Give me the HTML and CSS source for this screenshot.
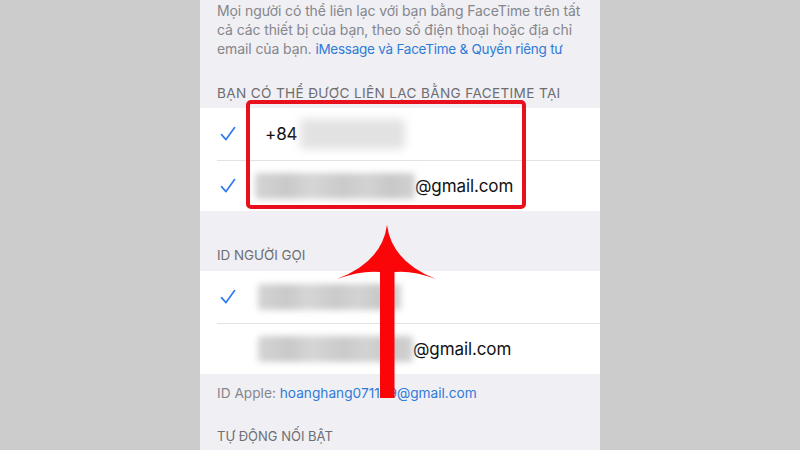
FILE: index.html
```html
<!DOCTYPE html>
<html lang="vi">
<head>
<meta charset="utf-8">
<title>FaceTime</title>
<link rel="stylesheet" href="styles.css">
</head>
<body>
<div class="page">
  <div class="phone">
    <p class="desc">Mọi người có thể liên lạc với bạn bằng FaceTime trên tất cả các thiết bị của bạn, theo số điện thoại hoặc địa chỉ email của bạn. <span class="link tight">iMessage và FaceTime &amp; Quyền riêng tư</span></p>

    <div class="header h1">BẠN CÓ THỂ ĐƯỢC LIÊN LẠC BẰNG FACETIME TẠI</div>
    <div class="group">
      <div class="row">
        <span class="check"><svg viewBox="0 0 16 16" width="16" height="16"><path d="M1.5 8.6 L6 13.6 L14.6 1.6" fill="none" stroke="#2f7bf0" stroke-width="1.7" stroke-linecap="round" stroke-linejoin="round"/></svg></span>
        <span class="val phone-num">+84</span><span class="blur b1"></span>
      </div>
      <div class="row">
        <span class="check"><svg viewBox="0 0 16 16" width="16" height="16"><path d="M1.5 8.6 L6 13.6 L14.6 1.6" fill="none" stroke="#2f7bf0" stroke-width="1.7" stroke-linecap="round" stroke-linejoin="round"/></svg></span>
        <span class="blur b2"></span><span class="val">@gmail.com</span>
      </div>
    </div>

    <div class="header h2">ID NGƯỜI GỌI</div>
    <div class="group">
      <div class="row">
        <span class="check"><svg viewBox="0 0 16 16" width="16" height="16"><path d="M1.5 8.6 L6 13.6 L14.6 1.6" fill="none" stroke="#2f7bf0" stroke-width="1.7" stroke-linecap="round" stroke-linejoin="round"/></svg></span>
        <span class="blur b3"></span>
      </div>
      <div class="row">
        <span class="check"></span>
        <span class="blur b4"></span><span class="val">@gmail.com</span>
      </div>
    </div>

    <div class="footer">ID Apple: <span class="link">hoanghang071109@gmail.com</span></div>
    <div class="header h3">TỰ ĐỘNG NỐI BẬT</div>

    <div class="highlight"></div>
    <svg class="arrow" viewBox="0 0 400 450" width="400" height="450">
      <path d="M187 225 Q192 262 236 279 Q212 270 194.5 272 L194.5 398 L180 398 L180 272 Q162 270 137 279 Q182 262 187 225 Z" fill="#fa0508"/>
    </svg>
  </div>
</div>
</body>
</html>
```

FILE: styles.css
```css
html, body {
  margin: 0;
  padding: 0;
}
body {
  background: #cccccc;
  font-family: "Inter", "Noto Sans", "DejaVu Sans", sans-serif;
}
.page {
  display: flex;
  justify-content: center;
  height: 450px;
  overflow: hidden;
}
.phone {
  position: relative;
  width: 400px;
  height: 450px;
  background: #efeff4;
  overflow: hidden;
}
.desc {
  margin: 0;
  padding: 1px 17px 0 17px;
  font-size: 14px;
  line-height: 19px;
  color: #86868b;
  letter-spacing: -0.1px;
}
.link {
  color: #2f7bd8;
}
.tight {
  font-size: 13.5px;
  letter-spacing: -0.25px;
}
.header {
  font-size: 13.4px;
  line-height: 16px;
  color: #6d6d72;
  padding: 0 17px;
}
.h1 {
  padding-top: 26px;
  padding-bottom: 7px;
  font-size: 13.6px;
  letter-spacing: 0.35px;
}
.h2 {
  padding-top: 36px;
  padding-bottom: 8px;
}
.h3 {
  padding-top: 27px;
  font-size: 13px;
}
.group {
  background: #ffffff;
}
.row {
  display: flex;
  align-items: center;
  height: 51.5px;
  margin-left: 17px;
  box-sizing: border-box;
}
.row + .row {
  border-top: 1px solid #e3e3e6;
}
.check {
  width: 38px;
  flex: none;
  display: flex;
  align-items: center;
  padding-left: 3px;
  box-sizing: border-box;
}
.val {
  font-size: 17px;
  color: #111111;
  letter-spacing: -0.1px;
}
.phone-num {
  margin-left: 10px;
}
.blur {
  display: block;
  height: 26px;
  background: linear-gradient(90deg, #d4d4d4 0%, #c9c9c9 20%, #d6d6d6 35%, #cacaca 55%, #d3d3d3 70%, #c8c8c8 85%, #d2d2d2 100%);
  filter: blur(3px);
  border-radius: 3px;
}
.b1 {
  width: 105px;
  margin-left: 3px;
  background: #e2e2e2;
  height: 30px;
  filter: blur(5px);
}
.b2 {
  width: 160px;
  margin-left: 0;
}
.b3 {
  width: 143px;
  margin-left: 3px;
}
.b4 {
  width: 155px;
  margin-left: 3px;
}
.footer {
  font-size: 13.7px;
  line-height: 16px;
  color: #86868b;
  padding: 11px 17px 0 17px;
}
.highlight {
  position: absolute;
  left: 46px;
  top: 100px;
  width: 280px;
  height: 109px;
  box-sizing: border-box;
  border: 4px solid #e8101c;
  border-radius: 5px;
}
.arrow {
  position: absolute;
  left: 0;
  top: 0;
}
```
